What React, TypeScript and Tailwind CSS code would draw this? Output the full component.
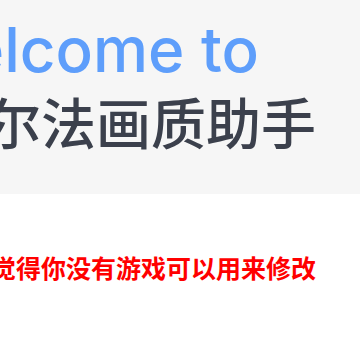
export default function App() {
  return (
    <div className="w-[360px] h-[360px] overflow-hidden bg-white">
      <div className="h-[194px] bg-[#f6f6f6] pt-[19px]">
        <div className="flex w-[259px] justify-end">
          <span className="whitespace-nowrap text-[62px] leading-[62px] font-medium text-[#5e9efb] [font-family:Inter,sans-serif]">
            Welcome to
          </span>
        </div>
        <div className="flex w-[316px] justify-end">
          <span className="whitespace-nowrap text-[55px] leading-[78px] font-medium text-[#3b404c] [font-family:'Noto_Sans_CJK_SC',sans-serif]">
            阿尔法画质助手
          </span>
        </div>
      </div>
      <div className="pt-[56px]">
        <div className="flex w-[316px] justify-end">
          <span className="whitespace-nowrap text-[25px] leading-[34px] font-bold text-[#ff0000] [font-family:'Noto_Sans_CJK_SC',sans-serif]">
            觉得你没有游戏可以用来修改
          </span>
        </div>
      </div>
    </div>
  );
}
